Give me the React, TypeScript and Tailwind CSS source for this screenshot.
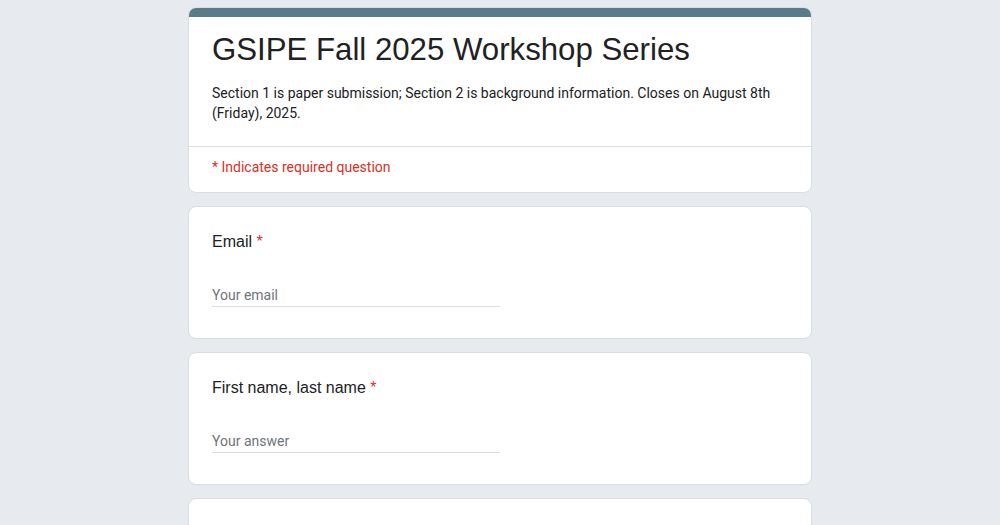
import React from "react";

function Question({ label, placeholder }: { label: string; placeholder: string }) {
  return (
    <div className="bg-white rounded-lg border border-[#dadce0] h-[133px] px-[23px] pt-[23px]">
      <div className="text-[16px] leading-[24px] text-[#202124]" style={{ fontFamily: '"Liberation Sans", Arial, sans-serif' }}>
        {label}
        <span className="text-[#d93025]"> *</span>
      </div>
      <div className="mt-[31px] w-[288px] border-b border-[#dadce0] pb-[1px]">
        <div className="text-[14px] leading-[20px] text-[#70757a]" style={{ fontFamily: 'Roboto, "Liberation Sans", sans-serif' }}>
          {placeholder}
        </div>
      </div>
    </div>
  );
}

export default function App() {
  return (
    <div className="w-full min-h-[525px] h-[525px] overflow-hidden bg-[#e7ebef]">
      <div className="w-[624px] mx-auto pt-[7px] flex flex-col gap-[13px]">
        <div className="bg-white rounded-lg border border-[#dadce0] overflow-hidden">
          <div className="h-[10px] bg-[#5a7b88] -mx-px -mt-px" />
          <div className="px-[23px] pt-[13px] pb-[23px]">
            <div
              className="text-[31.2px] leading-[40px] text-[#202124]"
              style={{ fontFamily: '"Liberation Sans", Arial, sans-serif' }}
            >
              GSIPE Fall 2025 Workshop Series
            </div>
            <div
              className="mt-[13px] text-[14px] leading-[20px] text-[#202124]"
              style={{ fontFamily: 'Roboto, "Liberation Sans", sans-serif' }}
            >
              Section 1 is paper submission; Section 2 is background information. Closes on August 8th (Friday), 2025.
            </div>
          </div>
          <div className="border-t border-[#dadce0] px-[23px] pt-[10px] pb-[15px]">
            <div
              className="text-[14px] leading-[20px] text-[#d93025]"
              style={{ fontFamily: 'Roboto, "Liberation Sans", sans-serif' }}
            >
              * Indicates required question
            </div>
          </div>
        </div>
        <Question label="Email" placeholder="Your email" />
        <Question label="First name, last name" placeholder="Your answer" />
        <div className="bg-white rounded-lg border border-[#dadce0] h-[133px]" />
      </div>
    </div>
  );
}
